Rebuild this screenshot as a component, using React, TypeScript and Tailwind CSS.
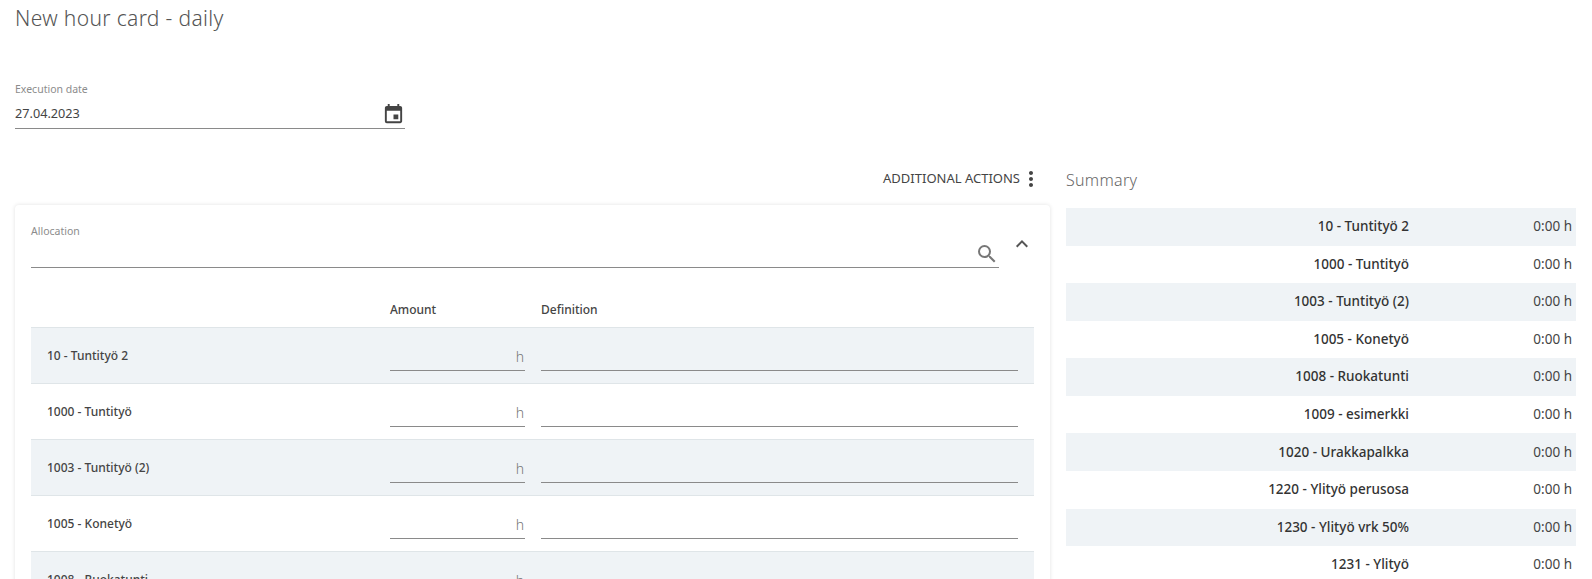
import { MdEvent, MdExpandLess, MdMoreVert, MdSearch } from "react-icons/md";

const allocations = [
  "10 - Tuntityö 2",
  "1000 - Tuntityö",
  "1003 - Tuntityö (2)",
  "1005 - Konetyö",
  "1008 - Ruokatunti",
];

const summary = [
  "10 - Tuntityö 2",
  "1000 - Tuntityö",
  "1003 - Tuntityö (2)",
  "1005 - Konetyö",
  "1008 - Ruokatunti",
  "1009 - esimerkki",
  "1020 - Urakkapalkka",
  "1220 - Ylityö perusosa",
  "1230 - Ylityö vrk 50%",
  "1231 - Ylityö",
];

export default function App() {
  return (
    <div className="h-[579px] overflow-hidden bg-white pl-[15px] pr-4 font-['Noto_Sans',sans-serif] text-[#333]">
      <h1 className="h-[37px] text-[21px] leading-[37px] font-light tracking-[0.35px] text-[#555]">
        New hour card - daily
      </h1>

      <div className="mt-[45px] w-[390px] border-b border-[#8a8a8a]">
        <div className="text-[10.5px] leading-[14px] text-[#8c8c8c]">Execution date</div>
        <div className="flex h-[32px] items-center justify-between pt-[4px]">
          <span className="text-[12.7px] text-[#444]">27.04.2023</span>
          <MdEvent className="text-[23px] text-[#444]" />
        </div>
      </div>

      <div className="mt-[35px] flex gap-4">
        <div className="w-[1035px] shrink-0">
          <div className="flex h-[30px] items-center justify-end pr-[7px]">
            <span className="text-[13px] text-[#444]">ADDITIONAL ACTIONS</span>
            <MdMoreVert className="-ml-[1px] text-[24px] text-[#444]" />
          </div>

          <div className="mt-[11px] rounded-[4px] bg-white pl-4 pr-4 pt-[19px] shadow-[0_0_4px_rgba(0,0,0,0.12)]">
            <div className="flex">
              <div className="w-[969px] border-b border-[#8a8a8a]">
                <div className="text-[10.5px] leading-[14px] text-[#8c8c8c]">Allocation</div>
                <div className="flex h-[29px] items-center justify-end pt-[3px]">
                  <MdSearch className="text-[24px] text-[#777]" />
                </div>
              </div>
              <MdExpandLess className="ml-[11px] mt-[8px] text-[24px] text-[#555]" />
            </div>

            <div className="flex h-[59px] items-end pb-[8px] text-[12px] font-medium text-[#444]">
              <div className="w-[359px]" />
              <div className="w-[151px]">Amount</div>
              <div>Definition</div>
            </div>

            {allocations.map((name, i) => (
              <div
                key={name}
                className={`flex h-[56px] border-t border-[#dfe5e8] ${i % 2 === 0 ? "bg-[#eff3f6]" : "bg-white"}`}
              >
                <div className="w-[359px] pl-4 pt-[18.5px] text-[12px] font-medium text-[#444]">{name}</div>
                <div className="flex h-[43px] w-[135px] items-end justify-end border-b border-[#8a8a8a] pb-[3px] pr-[1px] text-[14px] font-light text-[#777]">
                  h
                </div>
                <div className="ml-4 h-[43px] w-[477px] border-b border-[#8a8a8a]" />
              </div>
            ))}
          </div>
        </div>

        <div className="flex-1">
          <div className="flex h-[30px] items-center pt-[1px] text-[16px] font-light tracking-[0.3px] text-[#666]">
            Summary
          </div>
          <div className="mt-[14px]">
            {summary.map((name, i) => (
              <div
                key={name}
                className={`flex h-[37.57px] items-center pb-[1px] text-[13.5px] ${i % 2 === 0 ? "bg-[#eff3f6]" : "bg-white"}`}
              >
                <div className="w-[343px] text-right font-medium text-[#333]">{name}</div>
                <div className="flex-1 pr-[4px] text-right text-[#444]">0:00 h</div>
              </div>
            ))}
          </div>
        </div>
      </div>
    </div>
  );
}
